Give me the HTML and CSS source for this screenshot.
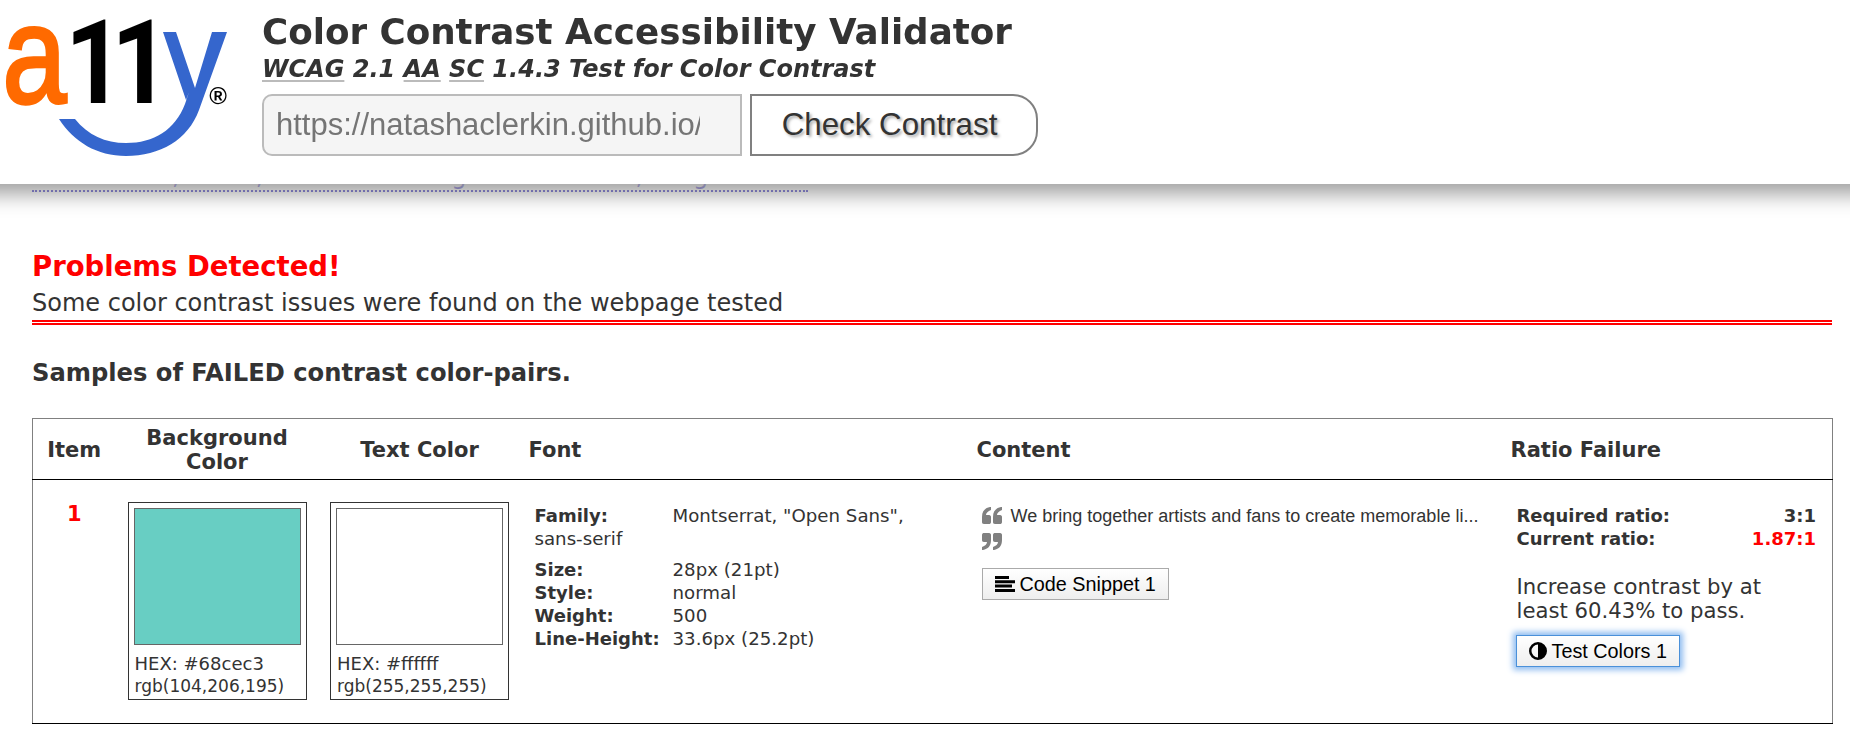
FILE: index.html
```html
<!DOCTYPE html>
<html lang="en">
<head>
<meta charset="utf-8">
<title>Color Contrast Accessibility Validator</title>
<link rel="stylesheet" href="styles.css">
</head>
<body>
<header class="site-header">
  <svg class="logo" viewBox="0 0 232 160" width="232" height="160" role="img" aria-label="a11y">
    <text class="logo-a" transform="translate(2.400 103) scale(0.82 1)">a</text>
    <text class="logo-one" transform="translate(65 103) scale(0.88 1)">11</text>
    <path class="logo-y" d="M163 32H176L195 88L212 32H227L199 110C188 140 160 156 126 156C97 156 74 142 59 119H75C88 135 105 143 126 143C154 143 175 130 185 104L189 92L186 100Z"/>
    <text class="logo-r" x="218" y="104">®</text>
  </svg>
  <div class="header-body">
    <h1 class="title">Color Contrast Accessibility Validator</h1>
    <p class="subtitle"><abbr>WCAG</abbr> 2.1 <abbr>AA</abbr> <abbr>SC</abbr> 1.4.3 Test for Color Contrast</p>
    <form class="check-form">
      <input class="url-input" type="text" value="https://natashaclerkin.github.io/" aria-label="URL">
      <button class="check-button" type="button">Check Contrast</button>
    </form>
  </div>
</header>

<main class="page">
  <p class="tested"><a class="tested-link" href="#">Hear artists, locals, in all the testing resulted from, song and the</a></p>

  <h2 class="problems">Problems Detected!</h2>
  <p class="summary">Some color contrast issues were found on the webpage tested</p>
  <h3 class="samples">Samples of FAILED contrast color-pairs.</h3>

  <table class="results">
    <thead>
      <tr>
        <th class="col-item">Item</th>
        <th class="col-bg">Background Color</th>
        <th class="col-text">Text Color</th>
        <th class="col-font left">Font</th>
        <th class="col-content left">Content</th>
        <th class="col-ratio left">Ratio Failure</th>
      </tr>
    </thead>
    <tbody>
      <tr>
        <td class="item-number">1</td>
        <td>
          <div class="swatch-card">
            <div class="swatch swatch-teal"></div>
            <div class="hex">HEX: #68cec3</div>
            <div class="rgb">rgb(104,206,195)</div>
          </div>
        </td>
        <td>
          <div class="swatch-card">
            <div class="swatch"></div>
            <div class="hex">HEX: #ffffff</div>
            <div class="rgb">rgb(255,255,255)</div>
          </div>
        </td>
        <td class="font-cell">
          <div class="family"><b class="font-label">Family:</b>Montserrat, "Open Sans", <span class="nowrap">sans-serif</span></div>
          <div><b class="font-label">Size:</b>28px (21pt)</div>
          <div><b class="font-label">Style:</b>normal</div>
          <div><b class="font-label">Weight:</b>500</div>
          <div><b class="font-label">Line-Height:</b>33.6px (25.2pt)</div>
        </td>
        <td class="content-cell">
          <div class="quote">
            <svg class="quote-icon" viewBox="0 0 20 17" width="20" height="17" aria-hidden="true"><path d="M0 10C0 4 3 1 8 0H9V3C6 4 4 6 4 8H7C8.500 8 9 9 9 10V15C9 16.500 8 17 7 17H2C.5 17 0 16 0 15ZM11 10C11 4 14 1 19 0H20V3C17 4 15 6 15 8H18C19.500 8 20 9 20 10V15C20 16.500 19 17 18 17H13C11.500 17 11 16 11 15Z"/></svg>
            We bring together artists and fans to create memorable li...
            <svg class="quote-icon" viewBox="0 0 20 17" width="20" height="17" aria-hidden="true"><path transform="rotate(180 10 8.500)" d="M0 10C0 4 3 1 8 0H9V3C6 4 4 6 4 8H7C8.500 8 9 9 9 10V15C9 16.500 8 17 7 17H2C.5 17 0 16 0 15ZM11 10C11 4 14 1 19 0H20V3C17 4 15 6 15 8H18C19.500 8 20 9 20 10V15C20 16.500 19 17 18 17H13C11.500 17 11 16 11 15Z"/></svg>
          </div>
          <button class="mini-button" type="button">
            <svg viewBox="0 0 20 16" width="20" height="16" aria-hidden="true"><path d="M0 0H14V3H0ZM0 4.300H20V7.300H0ZM0 8.600H17V11.600H0ZM0 13H20V16H0Z"/></svg>
            Code Snippet 1
          </button>
        </td>
        <td class="ratio-cell">
          <div class="ratio-row"><b>Required ratio:</b><b>3:1</b></div>
          <div class="ratio-row"><b>Current ratio:</b><b class="fail">1.87:1</b></div>
          <p class="advice">Increase contrast by at least 60.43% to pass.</p>
          <button class="mini-button focused" type="button">
            <svg viewBox="0 0 18 18" width="18" height="18" aria-hidden="true"><path fill-rule="evenodd" d="M9 0A9 9 0 1 0 9 18A9 9 0 1 0 9 0ZM9 2.500V15.500A6.500 6.500 0 0 1 9 2.500Z"/></svg>
            Test Colors 1
          </button>
        </td>
      </tr>
    </tbody>
  </table>
</main>
</body>
</html>
```

FILE: styles.css
```css
* { box-sizing: border-box; }

html, body {
  margin: 0;
  background: #fff;
}

body {
  color: #333;
  font-family: "DejaVu Sans", Verdana, sans-serif;
}

.site-header {
  position: fixed;
  top: 0;
  left: -30px;
  right: -30px;
  z-index: 10;
  height: 184px;
  display: flex;
  padding-left: 30px;
  background: #fff;
  box-shadow: 0 10px 20px #9f9f9f;
}

.logo { flex: none; margin-right: 30px; }
.logo-a, .logo-r { font-family: "Liberation Sans", Arial, sans-serif; }
.logo-a { font-size: 140px; fill: #ff6a00; stroke: #ff6a00; stroke-width: 3.500px; }
.logo-one { font-family: Roboto, sans-serif; font-size: 117px; font-weight: 700; letter-spacing: -14.500px; fill: #000; }
.logo-y { fill: #3566cd; }
.logo-r { font-size: 24px; font-weight: 700; fill: #000; text-anchor: middle; }

.header-body { padding-top: 10px; }

.title {
  margin: 0;
  font-size: 35.700px;
  line-height: 44px;
  font-weight: 700;
  white-space: nowrap;
}

.subtitle {
  margin: 0 0 10px;
  font-size: 24px;
  line-height: 30px;
  font-weight: 700;
  font-style: italic;
}

.subtitle abbr {
  text-decoration: underline solid #bbb 2px;
  text-underline-offset: 3px;
  text-decoration-skip-ink: none;
}

.check-form { display: flex; gap: 8px; }

.url-input, .check-button {
  height: 62px;
  font-family: "Liberation Sans", Arial, sans-serif;
}

.url-input {
  width: 480px;
  padding: 0 40px 0 12px;
  font-size: 31px;
  border: 2px solid #bbb;
  border-radius: 10px 0 0 10px;
  background: #f5f5f5;
  color: #757575;
}

.check-button {
  width: 288px;
  padding: 0 9px 0 0;
  font-size: 31.300px;
  border: 2px solid #808080;
  border-radius: 0 25px 25px 0;
  background: #fff;
  color: #333;
  text-shadow: 2px 2px 3px #aaa;
}

.page { padding: 0 18px 0 32px; }

.tested {
  margin: 0;
  padding-top: 163px;
  font-size: 24px;
  line-height: 26px;
  white-space: nowrap;
}

.tested-link {
  color: #2a20c0;
  text-decoration: none;
  border-bottom: 2px dotted #2a20c0;
}

.problems {
  margin: 60px 0 0;
  font-size: 27.500px;
  line-height: 34px;
  font-weight: 700;
  color: #f00;
}

.summary {
  margin: 3px 0 0;
  font-size: 24px;
  line-height: 34px;
  border-bottom: 5px double #f00;
}

.samples {
  margin: 33px 0 0;
  font-size: 24.200px;
  line-height: 30px;
  font-weight: 700;
}

.results {
  width: 1800px;
  margin-top: 30px;
  border-collapse: collapse;
  table-layout: fixed;
  border: 1px solid #808080;
  border-bottom-color: #000;
}

.results th {
  height: 61px;
  padding: 2px 4px 0;
  font-size: 21px;
  line-height: 24px;
  font-weight: 700;
  text-align: center;
  border-bottom: 1px solid #000;
}

.results th.left { text-align: left; padding-left: 8px; }

.col-item { width: 83px; }
.col-bg { width: 203px; }
.col-text { width: 202px; }
.col-font { width: 448px; }
.col-content { width: 534px; }
.col-ratio { width: 330px; }

.results td {
  height: 243px;
  padding: 22px 0 23px;
  vertical-align: top;
}

.results td.item-number {
  padding-top: 22px;
  text-align: center;
  color: #f00;
  font-size: 21px;
  line-height: 24px;
  font-weight: 700;
}

.swatch-card {
  width: 179px;
  height: 198px;
  margin: 0 auto;
  padding: 5px;
  border: 1px solid #333;
}

.swatch {
  height: 137px;
  margin-bottom: 7px;
  border: 1px solid #666;
}

.swatch-teal { background: #68cec3; }

.hex, .rgb { padding-left: 1px; line-height: 23px; white-space: nowrap; }
.hex { font-size: 18px; }
.rgb { font-size: 17px; }

.results td.font-cell {
  padding: 25px 6px 0 14px;
  font-size: 18.200px;
  line-height: 22.700px;
}

.font-cell b { font-size: 18px; }
.family { margin-bottom: 9px; }
.font-label { display: inline-block; width: 138px; }
.nowrap { white-space: nowrap; }

.results td.content-cell { padding: 23px 8px 0 13px; }

.quote {
  margin-bottom: 13px;
  font-family: "Liberation Sans", Arial, sans-serif;
  font-size: 18px;
  line-height: 26px;
}

.quote-icon { fill: #808080; vertical-align: -2px; margin-right: 4px; }

.mini-button {
  display: inline-flex;
  align-items: center;
  gap: 5px;
  height: 32px;
  padding: 0 12px;
  font-family: "Liberation Sans", Arial, sans-serif;
  font-size: 19.800px;
  color: #000;
  border: 1px solid #aaa;
  background: linear-gradient(#fff, #eee);
}

.mini-button svg { fill: #000; flex: none; }

.focused {
  margin-left: -1px;
  border: 1px solid #4a90d9;
  box-shadow: 0 0 6px 3px #8fbcf0;
}

.results td.ratio-cell {
  padding: 25px 16px 0 14px;
  font-size: 18px;
  line-height: 22.700px;
}

.ratio-row { display: flex; justify-content: space-between; }
.fail { color: #f00; }

.advice {
  max-width: 280px;
  margin: 25px 0 13px;
  font-size: 21.200px;
  line-height: 23.500px;
}
```
